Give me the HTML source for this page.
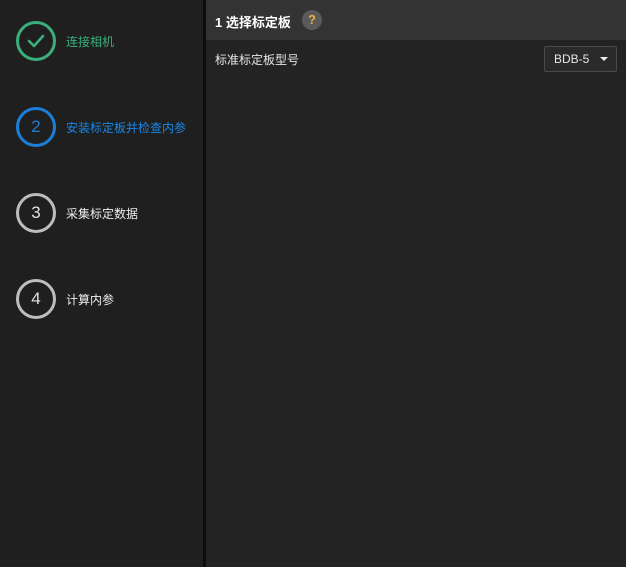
<!DOCTYPE html>
<html><head><meta charset="utf-8"><style>
*{margin:0;padding:0;box-sizing:border-box}
body{width:626px;height:567px;overflow:hidden;background:#232323;font-family:"Liberation Sans","Noto Sans CJK SC",sans-serif;position:relative}
.left{position:absolute;left:0;top:0;width:203px;height:567px;background:#1f1f1f}
.div{position:absolute;left:203px;top:0;width:3px;height:567px;background:#0c0c0c}
.c{position:absolute;left:16px;width:40px;height:40px;border-radius:50%;border:3px solid #bdbdbd;color:#e0e0e0;font-size:17px;text-align:center;line-height:34px}
.t{position:absolute;left:66px;font-size:12px;color:#eee}
.hdr{position:absolute;left:206px;top:0;right:0;height:40px;background:#333}
</style></head><body>
<div class="left"></div><div class="div"></div>
<div class="c" style="top:21px;border-color:#3aaf7c"><svg width="34" height="34" viewBox="0 0 34 34"><path d="M10 17 L15 22 L24 12" fill="none" stroke="#3aaf7c" stroke-width="2.6" stroke-linecap="round" stroke-linejoin="round"/></svg></div>
<div class="t" style="top:33px;color:#3aaf7c">连接相机</div>
<div class="c" style="top:107px;border-color:#1b7fd8;color:#1b7fd8">2</div>
<div class="t" style="top:119px;color:#1b86e8">安装标定板并检查内参</div>
<div class="c" style="top:193px">3</div>
<div class="t" style="top:205px">采集标定数据</div>
<div class="c" style="top:279px">4</div>
<div class="t" style="top:291px">计算内参</div>
<div class="hdr"></div>
<div style="position:absolute;left:215px;top:12px;font-size:13px;font-weight:bold;color:#fff">1 选择标定板</div>
<div style="position:absolute;left:302px;top:10px;width:20px;height:20px;border-radius:50%;background:#5a5a5a;color:#e8b040;font-size:13px;font-weight:bold;text-align:center;line-height:20px">?</div>
<div style="position:absolute;left:215px;top:51px;font-size:12px;color:#e6e6e6">标准标定板型号</div>
<div style="position:absolute;left:544px;top:46px;width:73px;height:26px;border:1px solid #4a4a4a;border-radius:2px;background:#2a2a2a;color:#e6e6e6;font-size:12px;line-height:24px;padding-left:9px">BDB-5
<div style="position:absolute;right:8px;top:10px;width:0;height:0;border-left:4px solid transparent;border-right:4px solid transparent;border-top:4px solid #eee"></div></div>
</body></html>
